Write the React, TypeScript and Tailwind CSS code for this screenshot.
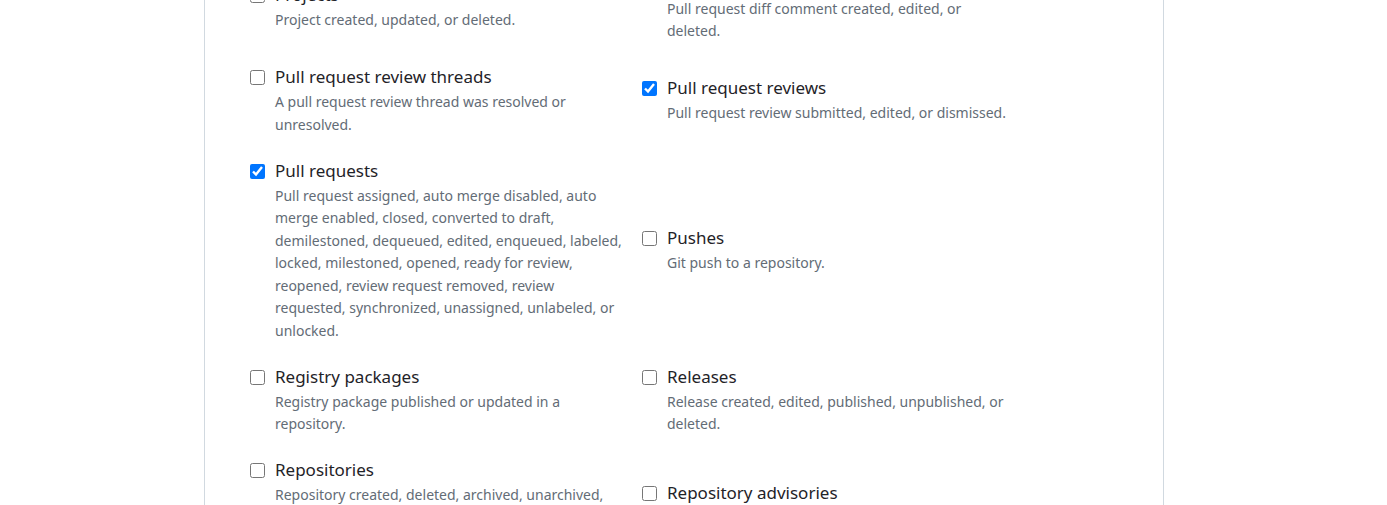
import React from "react";

type EventItem = {
  title: string;
  description: string;
  checked?: boolean;
};

const rows: [EventItem, EventItem][] = [
  [
    { title: "Projects", description: "Project created, updated, or deleted." },
    {
      title: "Pull request review comments",
      description: "Pull request diff comment created, edited, or deleted.",
    },
  ],
  [
    {
      title: "Pull request review threads",
      description: "A pull request review thread was resolved or unresolved.",
    },
    {
      title: "Pull request reviews",
      description: "Pull request review submitted, edited, or dismissed.",
      checked: true,
    },
  ],
  [
    {
      title: "Pull requests",
      description:
        "Pull request assigned, auto merge disabled, auto merge enabled, closed, converted to draft, demilestoned, dequeued, edited, enqueued, labeled, locked, milestoned, opened, ready for review, reopened, review request removed, review requested, synchronized, unassigned, unlabeled, or unlocked.",
      checked: true,
    },
    { title: "Pushes", description: "Git push to a repository." },
  ],
  [
    {
      title: "Registry packages",
      description: "Registry package published or updated in a repository.",
    },
    {
      title: "Releases",
      description: "Release created, edited, published, unpublished, or deleted.",
    },
  ],
  [
    {
      title: "Repositories",
      description:
        "Repository created, deleted, archived, unarchived, publicized, privatized, edited, renamed, or transferred.",
    },
    {
      title: "Repository advisories",
      description: "Repository advisory published or withdrawn.",
    },
  ],
];

function EventCheckbox({ item }: { item: EventItem }) {
  return (
    <label className="flex flex-row items-start">
      <input
        type="checkbox"
        defaultChecked={item.checked}
        className="mt-[6px] h-[15px] w-[15px] shrink-0 accent-[#0075ff]"
      />
      <div className="ml-[10px] w-[350px]">
        <div className="text-[17px] leading-[26px] text-[#1f2328]">
          {item.title}
        </div>
        <div className="mt-[1px] text-[14px] leading-[22.5px] text-[#636c76]">
          {item.description}
        </div>
      </div>
    </label>
  );
}

export default function App() {
  return (
    <div className="h-[505px] w-full overflow-hidden bg-white font-['Noto_Sans','Open_Sans',sans-serif]">
      <div className="ml-[204px] flex h-full w-[960px] flex-col border-x border-[#d1d9e0]">
        <div className="-mt-[29.5px] grid grid-cols-[392px_392px] items-center gap-y-[21.5px] pl-[45px]">
          {rows.map(([left, right]) => (
            <React.Fragment key={left.title}>
              <EventCheckbox item={left} />
              <EventCheckbox item={right} />
            </React.Fragment>
          ))}
        </div>
      </div>
    </div>
  );
}
